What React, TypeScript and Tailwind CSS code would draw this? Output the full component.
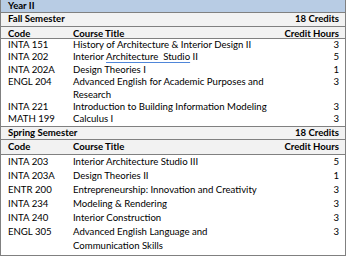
import React from "react";

type Row = { code: string; title: React.ReactNode; title2?: string; hours: string };

const fall: Row[] = [
  { code: "INTA 151", title: "History of Architecture & Interior Design II", hours: "3" },
  {
    code: "INTA 202",
    title: (
      <span className="whitespace-pre">
        Interior{" "}
        <span className="underline decoration-[#4f86d9] decoration-1 underline-offset-[2px]">Architecture  Studio</span> II
      </span>
    ),
    hours: "5",
  },
  { code: "INTA 202A", title: "Design Theories I", hours: "1" },
  { code: "ENGL 204", title: "Advanced English for Academic Purposes and", title2: "Research", hours: "3" },
  { code: "INTA 221", title: "Introduction to Building Information Modeling", hours: "3" },
  { code: "MATH 199", title: "Calculus I", hours: "3" },
];

const spring: Row[] = [
  { code: "INTA 203", title: "Interior Architecture Studio III", hours: "5" },
  { code: "INTA 203A", title: "Design Theories II", hours: "1" },
  { code: "ENTR 200", title: "Entrepreneurship: Innovation and Creativity", hours: "3" },
  { code: "INTA 234", title: "Modeling & Rendering", hours: "3" },
  { code: "INTA 240", title: "Interior Construction", hours: "3" },
  { code: "ENGL 305", title: "Advanced English Language and", title2: "Communication Skills", hours: "3" },
];

function DataRows({ rows, lh }: { rows: Row[]; lh: string }) {
  return (
    <div className="flex flex-col">
      {rows.map((r, i) => (
        <div key={i} className={`grid grid-cols-[65px_1fr_auto] pl-[7px] pr-[6px] ${lh}`}>
          <div>{r.code}</div>
          <div className="flex flex-col">
            <div>{r.title}</div>
            {r.title2 && <div>{r.title2}</div>}
          </div>
          <div className="text-right">{r.hours}</div>
        </div>
      ))}
    </div>
  );
}

function SemesterHeader({ name, h }: { name: string; h: string }) {
  return (
    <div className={`flex items-center justify-between pl-[7px] pr-[6px] bg-[#f2f2f2] border-b border-[#808080] font-bold ${h}`}>
      <span>{name}</span>
      <span>18 Credits</span>
    </div>
  );
}

function ColHeader({ h }: { h: string }) {
  return (
    <div className={`grid grid-cols-[65px_1fr_auto] items-center pl-[7px] pr-[6px] bg-[#f2f2f2] border-b border-[#808080] font-bold ${h}`}>
      <span>Code</span>
      <span>Course Title</span>
      <span>Credit Hours</span>
    </div>
  );
}

export default function App() {
  return (
    <div className="w-[347px] h-[257px] bg-white">
      <div className="w-[346px] border-l border-r border-b border-[#808080] font-['Lato',sans-serif] text-[9.6px] text-black">
        <div className="flex items-center h-[13px] pl-[7px] bg-[#b8cce4] border-b border-[#808080] font-bold">Year II</div>
        <SemesterHeader name="Fall Semester" h="h-[14px]" />
        <ColHeader h="h-[12px]" />
        <div className="border-b border-[#808080]">
          <DataRows rows={fall} lh="leading-[12.4px]" />
        </div>
        <SemesterHeader name="Spring Semester" h="h-[13px]" />
        <ColHeader h="h-[15px]" />
        <div className="pb-[2px]">
          <DataRows rows={spring} lh="leading-[14px]" />
        </div>
      </div>
    </div>
  );
}
